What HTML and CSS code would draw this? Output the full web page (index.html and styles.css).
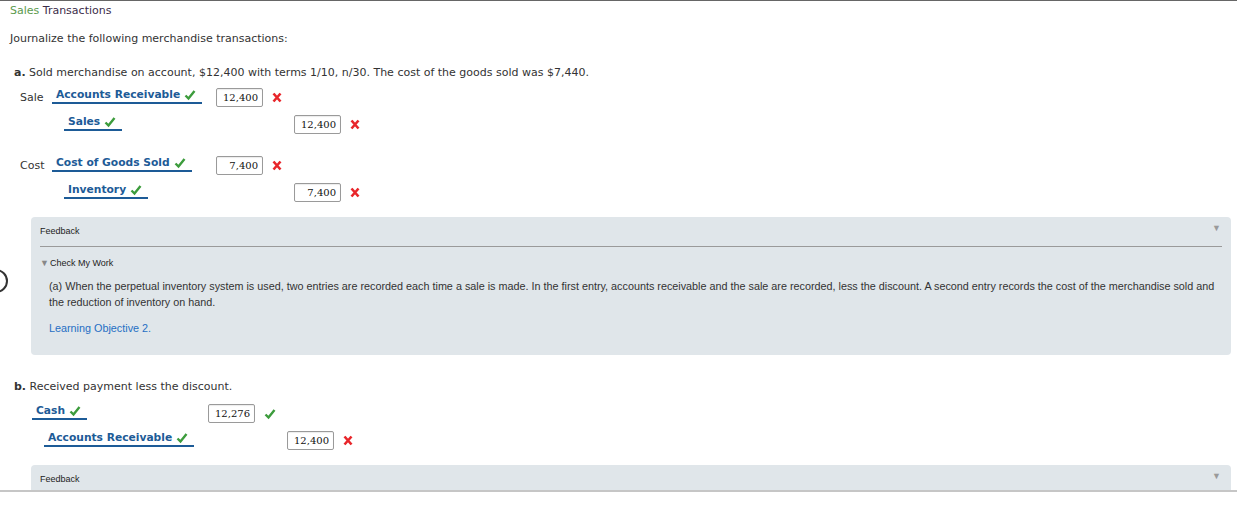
FILE: index.html
```html
<!DOCTYPE html>
<html lang="en">
<head>
    <meta charset="UTF-8">
    <title>Sales Transactions</title>
    <link rel="stylesheet" href="styles.css">
</head>
<body>

<div class="page">
    <div class="crumb"><span class="crumb-link">Sales</span> Transactions</div>

    <p class="intro">Journalize the following merchandise transactions:</p>

    <!-- Part a -->
    <p class="prompt prompt-a"><b>a.</b> Sold merchandise on account, $12,400 with terms 1/10, n/30. The cost of the goods sold was $7,440.</p>

    <div class="journal journal-a">
        <div class="entry">
            <div class="tag">Sale</div>
            <div class="acct-cell"><span class="acct">Accounts Receivable <svg class="ok" viewBox="0 0 12 12"><path d="M1.5 6.5 L4.5 9.5 L10.5 2"/></svg></span></div>
            <div class="amt-cell"><span class="amt">12,400</span><svg class="bad" viewBox="0 0 10 11"><path d="M1.5 1.5 L8.5 9.5 M8.5 1.5 L1.5 9.5"/></svg></div>
            <div></div>

            <div></div>
            <div class="acct-cell"><span class="acct credit">Sales <svg class="ok" viewBox="0 0 12 12"><path d="M1.5 6.5 L4.5 9.5 L10.5 2"/></svg></span></div>
            <div></div>
            <div class="amt-cell"><span class="amt">12,400</span><svg class="bad" viewBox="0 0 10 11"><path d="M1.5 1.5 L8.5 9.5 M8.5 1.5 L1.5 9.5"/></svg></div>
        </div>

        <div class="entry">
            <div class="tag">Cost</div>
            <div class="acct-cell"><span class="acct">Cost of Goods Sold <svg class="ok" viewBox="0 0 12 12"><path d="M1.5 6.5 L4.5 9.5 L10.5 2"/></svg></span></div>
            <div class="amt-cell"><span class="amt">7,400</span><svg class="bad" viewBox="0 0 10 11"><path d="M1.5 1.5 L8.5 9.5 M8.5 1.5 L1.5 9.5"/></svg></div>
            <div></div>

            <div></div>
            <div class="acct-cell"><span class="acct credit">Inventory <svg class="ok" viewBox="0 0 12 12"><path d="M1.5 6.5 L4.5 9.5 L10.5 2"/></svg></span></div>
            <div></div>
            <div class="amt-cell"><span class="amt">7,400</span><svg class="bad" viewBox="0 0 10 11"><path d="M1.5 1.5 L8.5 9.5 M8.5 1.5 L1.5 9.5"/></svg></div>
        </div>
    </div>

    <div class="feedback-row">
        <div class="gutter"><span class="ring"></span></div>
        <div class="feedback">
            <div class="feedback-head">Feedback <span class="caret">&#9660;</span></div>
            <div class="check-title"><span class="caret-small">&#9660;</span>Check My Work</div>
            <p class="explain">(a) When the perpetual inventory system is used, two entries are recorded each time a sale is made. In the first entry, accounts receivable and the sale are recorded, less the discount. A second entry records the cost of the merchandise sold and the reduction of inventory on hand.</p>
            <a class="objective" href="#">Learning Objective 2.</a>
        </div>
    </div>

    <!-- Part b -->
    <p class="prompt prompt-b"><b>b.</b> Received payment less the discount.</p>

    <div class="journal journal-b">
        <div class="entry">
            <div class="acct-cell"><span class="acct">Cash <svg class="ok" viewBox="0 0 12 12"><path d="M1.5 6.5 L4.5 9.5 L10.5 2"/></svg></span></div>
            <div class="amt-cell"><span class="amt">12,276</span><svg class="ok" viewBox="0 0 12 12"><path d="M1.5 6.5 L4.5 9.5 L10.5 2"/></svg></div>
            <div></div>

            <div class="acct-cell"><span class="acct credit">Accounts Receivable <svg class="ok" viewBox="0 0 12 12"><path d="M1.5 6.5 L4.5 9.5 L10.5 2"/></svg></span></div>
            <div></div>
            <div class="amt-cell"><span class="amt">12,400</span><svg class="bad" viewBox="0 0 10 11"><path d="M1.5 1.5 L8.5 9.5 M8.5 1.5 L1.5 9.5"/></svg></div>
        </div>
    </div>

    <div class="feedback-row feedback-row-b">
        <div class="gutter"></div>
        <div class="feedback">
            <div class="feedback-head">Feedback <span class="caret">&#9660;</span></div>
        </div>
    </div>
</div>

</body>
</html>
```

FILE: styles.css
```css
body {
    margin: 0;
    background-color: #fff;
    font-family: "DejaVu Sans", Verdana, sans-serif;
    font-size: 11px;
    color: #333;
}
.page {
    height: 492px;
    overflow: hidden;
    padding: 3px 6px 0 10px;
    border-top: 1px solid #666;
    border-bottom: 2px solid #c6c6c6;
    box-shadow: 0 2px 3px rgba(0, 0, 0, 0.08);
    box-sizing: border-box;
}
p {
    margin: 0;
}
.crumb {
    line-height: 14px;
    color: #3b2d4a;
}
.crumb-link {
    color: #5b9a4c;
}
.intro {
    line-height: 14px;
    margin-top: 14px;
}
.prompt {
    line-height: 14px;
    margin-left: 4px;
}
.prompt-a {
    margin-top: 20px;
}
.prompt-b {
    margin-top: 25px;
}

/* journal grids */
.journal {
    margin-top: 7px;
}
.journal-b {
    margin-top: 9px;
}
.entry {
    display: grid;
    grid-auto-rows: 27px;
}
.entry + .entry {
    margin-top: 14px;
}
.journal-a {
    margin-left: 10px;
}
.journal-a .entry {
    grid-template-columns: 32px 164px 78px auto;
}
.journal-b {
    margin-left: 22px;
}
.journal-b .entry {
    grid-template-columns: 176px 79px auto;
}
.tag {
    padding-top: 4px;
    line-height: 14px;
}
.acct-cell {
    display: flex;
    align-items: flex-start;
}
.acct {
    display: inline-flex;
    align-items: center;
    gap: 4px;
    padding: 0 6px 0 4px;
    line-height: 15px;
    border-bottom: 2px solid #1d5b97;
    color: #1d5b97;
    font-weight: bold;
    font-size: 10.7px;
}
.acct.credit {
    margin-left: 12px;
}
.ok {
    width: 12px;
    height: 12px;
    fill: none;
    stroke: #3c9c3c;
    stroke-width: 2.4;
}
.amt-cell {
    display: flex;
    align-items: center;
    gap: 9px;
    height: 19px;
    margin-top: 1px;
}
.amt {
    width: 47px;
    height: 19px;
    box-sizing: border-box;
    border: 1px solid #9a9a9a;
    border-radius: 2px;
    box-shadow: inset 0 1px 1px rgba(0, 0, 0, 0.08);
    padding-right: 4px;
    text-align: right;
    line-height: 17px;
    font-family: "DejaVu Serif", serif;
    font-size: 10px;
    color: #111;
}
.bad {
    width: 10px;
    height: 11px;
    fill: none;
    stroke: #e8262b;
    stroke-width: 2.6;
}

/* feedback panel */
.feedback-row {
    display: flex;
    margin-top: 8px;
    margin-left: -10px;
}
.gutter {
    width: 31px;
    flex-shrink: 0;
    overflow: hidden;
}
.ring {
    display: block;
    width: 20px;
    height: 20px;
    margin: 52px 0 0 -16px;
    border: 2px solid #333;
    border-radius: 50%;
}
.feedback {
    flex: 1;
    background-color: #e0e6ea;
    border-radius: 4px;
    padding: 0 9px 19px;
    font-family: "Liberation Sans", Arial, sans-serif;
    color: #222;
}
.feedback-head {
    display: flex;
    justify-content: space-between;
    padding: 8px 0 9px;
    line-height: 12px;
    font-size: 9px;
    border-bottom: 1px solid #9a9a9a;
}
.caret {
    color: #9a9a9a;
    font-size: 9px;
    margin: -3px 1px 0 0;
}
.check-title {
    margin-top: 10px;
    line-height: 12px;
    font-size: 9px;
}
.caret-small {
    color: #888;
    font-size: 9px;
    margin-right: 1px;
}
.explain {
    margin-top: 9px;
    padding-left: 9px;
    line-height: 16px;
    font-size: 10.8px;
    color: #333;
}
.objective {
    display: block;
    margin-top: 10px;
    padding-left: 9px;
    line-height: 16px;
    font-size: 10.8px;
    color: #1f6fc4;
    text-decoration: none;
}
```
